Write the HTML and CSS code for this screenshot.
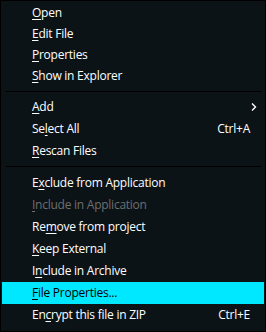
FILE: index.html
```html
<!DOCTYPE html>
<html>
<head>
<meta charset="utf-8">
<link rel="stylesheet" href="styles.css">
</head>
<body>
<div class="menu">
  <div class="group group-top">
    <div class="item"><span class="label"><u>O</u>pen</span></div>
    <div class="item"><span class="label"><u>E</u>dit File</span></div>
    <div class="item"><span class="label"><u>P</u>roperties</span></div>
    <div class="item"><span class="label"><u>S</u>how in Explorer</span></div>
  </div>
  <div class="sep sep-a"></div>
  <div class="group">
    <div class="item"><span class="label"><u>A</u>dd</span><span class="arrow"><svg width="6" height="8" viewBox="0 0 6 8"><path d="M1 0.5 L4.5 4 L1 7.5" fill="none" stroke="#fff" stroke-width="1.4"/></svg></span></div>
    <div class="item"><span class="label">Se<u>l</u>ect All</span><span class="key">Ctrl+A</span></div>
    <div class="item"><span class="label"><u>R</u>escan Files</span></div>
  </div>
  <div class="sep sep-b"></div>
  <div class="group">
    <div class="item"><span class="label">E<u>x</u>clude from Application</span></div>
    <div class="item disabled"><span class="label"><u>I</u>nclude in Application</span></div>
    <div class="item"><span class="label">Re<u>m</u>ove from project</span></div>
    <div class="item"><span class="label"><u>K</u>eep External</span></div>
    <div class="item"><span class="label">I<u>n</u>clude in Archive</span></div>
    <div class="item active"><span class="label"><u>F</u>ile Properties...</span></div>
    <div class="item"><span class="label">En<u>c</u>rypt this file in ZIP</span><span class="key">Ctrl+E</span></div>
  </div>
</div>
</body>
</html>
```
FILE: styles.css
```css
html, body {
  margin: 0;
  padding: 0;
  background: #0c1317;
}
.menu {
  width: 266px;
  height: 332px;
  box-sizing: border-box;
  border: 1px solid #000;
  background: #0c1317;
  padding: 1px 1px;
  font-family: "Open Sans", "Noto Sans", sans-serif;
  font-size: 12px;
  letter-spacing: -0.25px;
  color: #fff;
}
.group {
  display: flex;
  flex-direction: column;
}
.item {
  box-sizing: border-box;
  height: 22px;
  display: flex;
  align-items: center;
  padding: 0 14px 1px 30px;
  white-space: nowrap;
}
.group-top .item {
  height: 21px;
}
.item .label {
  flex: 1;
}
.item u {
  text-decoration-thickness: 1px;
  text-underline-offset: 2px;
}
.item.disabled {
  color: #6e6e6e;
}
.item.active {
  background: #00e8ff;
  color: #000;
}
.key {
  color: #fff;
}
.arrow {
  display: flex;
  margin-right: -7px;
}
.sep {
  height: 1px;
  background: #000;
  margin: 4px 3px 4px 4px;
}
.sep-a {
  margin-top: 5px;
}
.sep-b {
  margin-bottom: 5px;
}
```
